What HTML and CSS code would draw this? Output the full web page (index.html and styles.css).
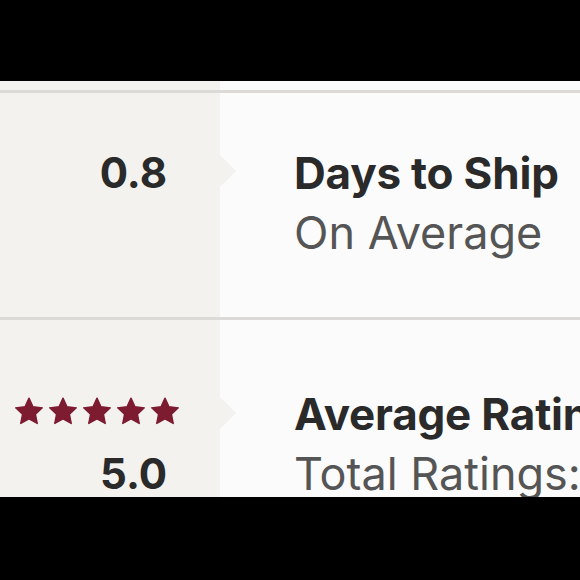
FILE: index.html
```html
<!DOCTYPE html>
<html>
<head>
<meta charset="utf-8">
<link rel="stylesheet" href="styles.css">
</head>
<body>
<div class="bar-top"></div>
<div class="frame">
  <div class="row row-lead">
    <div class="cell-left"></div>
    <div class="cell-right"></div>
  </div>
  <div class="divider"></div>
  <div class="row row-ship">
    <div class="cell-left">
      <div class="value">0.8</div>
    </div>
    <div class="cell-right">
      <div class="title">Days to Ship</div>
      <div class="sub">On Average</div>
    </div>
  </div>
  <div class="divider"></div>
  <div class="row row-rating">
    <div class="cell-left">
      <div class="stars">
        <svg class="star" viewBox="0 0 24 24"><path d="M12 1L15.41 8.31 23.41 9.29 17.52 14.79 19.05 22.71 12 18.8 4.95 22.71 6.48 14.79 0.59 9.29 8.59 8.31Z"/></svg>
        <svg class="star" viewBox="0 0 24 24"><path d="M12 1L15.41 8.31 23.41 9.29 17.52 14.79 19.05 22.71 12 18.8 4.95 22.71 6.48 14.79 0.59 9.29 8.59 8.31Z"/></svg>
        <svg class="star" viewBox="0 0 24 24"><path d="M12 1L15.41 8.31 23.41 9.29 17.52 14.79 19.05 22.71 12 18.8 4.95 22.71 6.48 14.79 0.59 9.29 8.59 8.31Z"/></svg>
        <svg class="star" viewBox="0 0 24 24"><path d="M12 1L15.41 8.31 23.41 9.29 17.52 14.79 19.05 22.71 12 18.8 4.95 22.71 6.48 14.79 0.59 9.29 8.59 8.31Z"/></svg>
        <svg class="star" viewBox="0 0 24 24"><path d="M12 1L15.41 8.31 23.41 9.29 17.52 14.79 19.05 22.71 12 18.8 4.95 22.71 6.48 14.79 0.59 9.29 8.59 8.31Z"/></svg>
      </div>
      <div class="value">5.0</div>
    </div>
    <div class="cell-right">
      <div class="title">Average Rating</div>
      <div class="sub">Total Ratings: 12</div>
    </div>
  </div>
</div>
<div class="bar-bottom"></div>
</body>
</html>
```
FILE: styles.css
```css
html, body {
  margin: 0;
  padding: 0;
  background: #000;
}
body {
  width: 580px;
  height: 580px;
  overflow: hidden;
  font-family: Inter, "Noto Sans", sans-serif;
}
.bar-top {
  height: 81px;
  background: #000;
}
.bar-bottom {
  height: 83px;
  background: #000;
}
.frame {
  height: 416px;
  overflow: hidden;
  background: #fbfbfb;
}
.row {
  display: flex;
}
.cell-left {
  width: 220px;
  flex: none;
  background: #f3f2ef;
  box-sizing: border-box;
  padding-right: 53px;
  display: flex;
  flex-direction: column;
  align-items: flex-end;
  position: relative;
}
.cell-right {
  flex: 1;
  padding-left: 74px;
  white-space: nowrap;
  overflow: hidden;
}
.row-lead {
  height: 9px;
}
.divider {
  height: 3px;
  background: #dcdad7;
}
.row-ship {
  height: 224px;
}
.row-ship .cell-left,
.row-ship .cell-right {
  padding-top: 50px;
}
.row-rating {
  height: 300px;
}
.row-rating .cell-left,
.row-rating .cell-right {
  padding-top: 64px;
}
.cell-left::after {
  content: "";
  position: absolute;
  right: -16px;
  top: 0;
  border-left: 16px solid #f3f2ef;
  border-top: 16px solid transparent;
  border-bottom: 16px solid transparent;
}
.row-lead .cell-left::after {
  display: none;
}
.row-ship .cell-left::after {
  top: 62px;
}
.row-rating .cell-left::after {
  top: 77px;
}
.value {
  font-weight: 700;
  font-size: 42px;
  line-height: 60px;
  color: #2a2a2a;
}
.title {
  font-weight: 700;
  font-size: 44px;
  line-height: 60px;
  color: #2a2a2a;
  letter-spacing: -0.2px;
}
.sub {
  font-weight: 400;
  font-size: 45px;
  line-height: 60px;
  color: #555555;
}
.stars {
  display: flex;
  gap: 6px;
  height: 60px;
  align-items: center;
  margin-right: -12px;
  position: relative;
  top: -3px;
}
.star {
  width: 28px;
  height: 28px;
  fill: #7d1b30;
  stroke: #7d1b30;
  stroke-width: 1.2;
  stroke-linejoin: round;
  display: block;
}
```
